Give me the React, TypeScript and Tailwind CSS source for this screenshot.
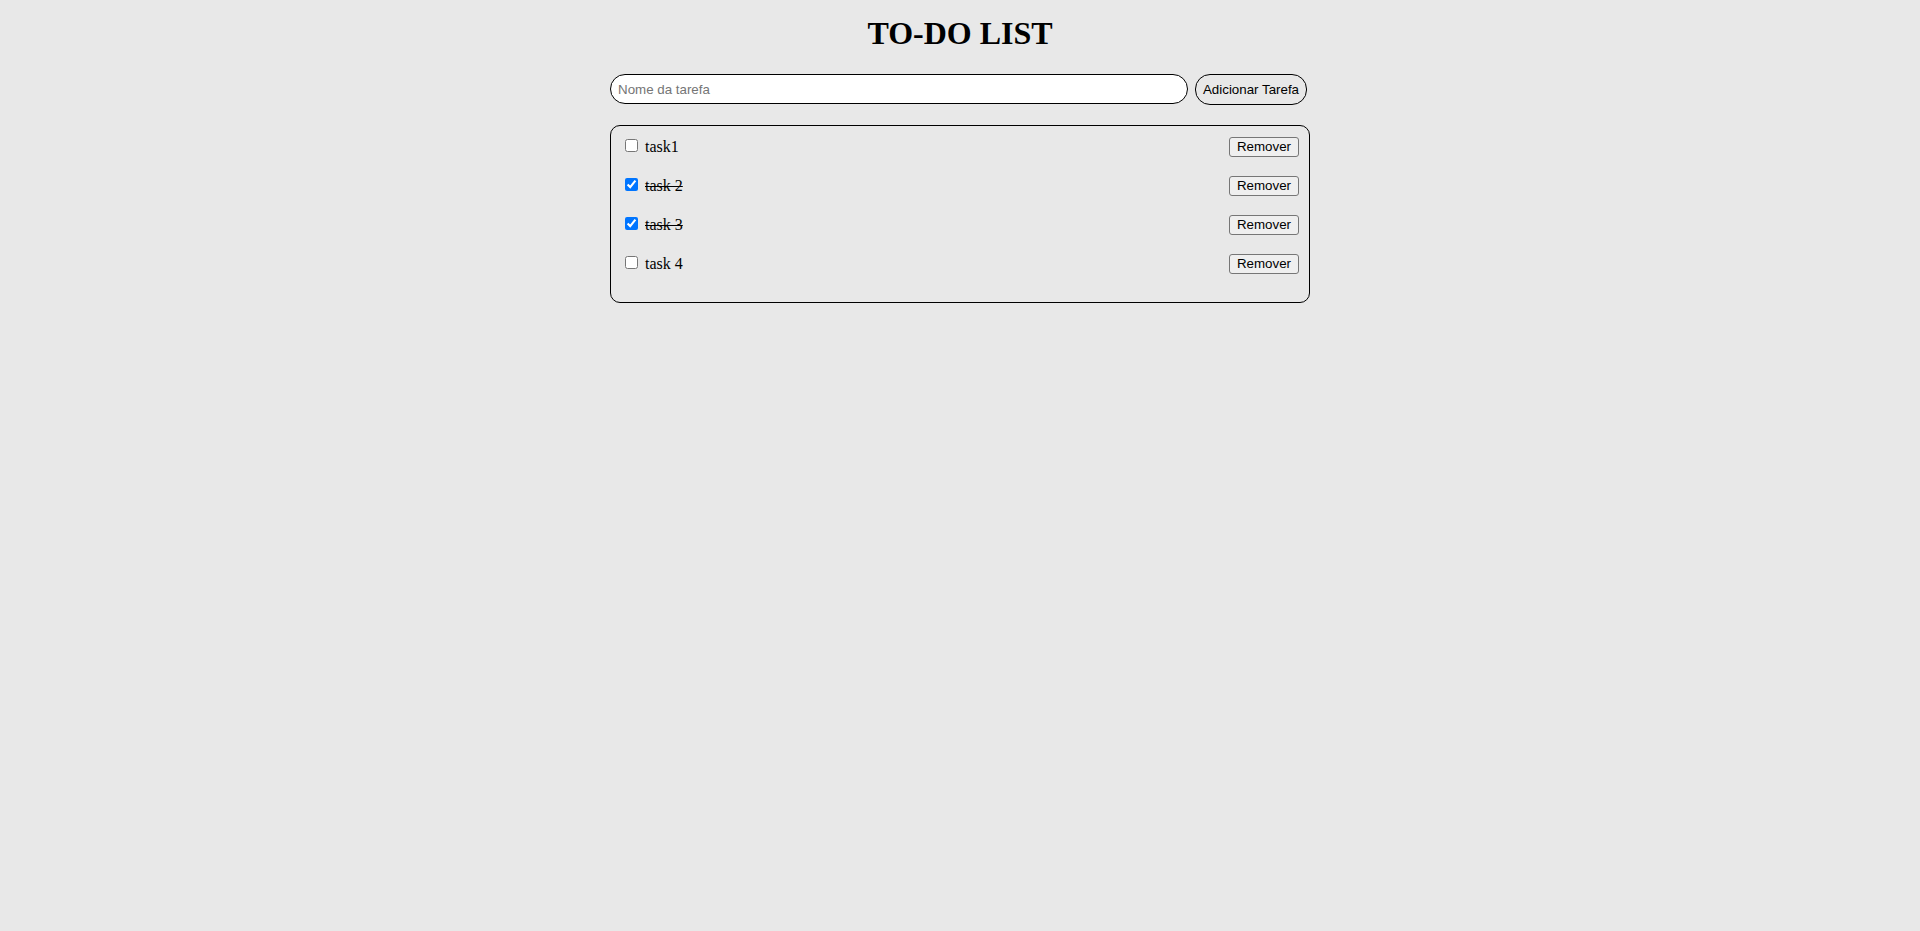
import React from "react";

const tasks = [
  { name: "task1", done: false },
  { name: "task 2", done: true },
  { name: "task 3", done: true },
  { name: "task 4", done: false },
];

export default function App() {
  return (
    <div className="min-h-[931px] w-full bg-[#e8e8e8] text-black font-['Liberation_Serif','Times_New_Roman',serif] overflow-hidden">
      <div className="mx-auto w-[700px] flex flex-col">
        <h1 className="mt-[15px] mb-[22px] text-center text-[32px] leading-[37px] font-bold">TO-DO LIST</h1>
        <div className="flex items-start h-[31px]">
          <input
            type="text"
            placeholder="Nome da tarefa"
            className="w-[578px] h-[30px] rounded-[15px] border border-black bg-white px-[7px] text-[13.33px] font-['Liberation_Sans',Arial,sans-serif] placeholder:text-[#757575] outline-none"
          />
          <button className="ml-[7px] w-[112px] h-[31px] rounded-[15px] border border-black bg-[#e8e8e8] text-[13.33px] font-['Liberation_Sans',Arial,sans-serif] text-black">
            Adicionar Tarefa
          </button>
        </div>
        <div className="mt-[20px] w-[700px] rounded-[10px] border border-black px-[10px] pt-[11px] pb-[9px]">
          {tasks.map((t) => (
            <div key={t.name} className="flex items-center justify-between h-[20px] mb-[19px]">
              <div className="flex items-center">
                <input
                  type="checkbox"
                  checked={t.done}
                  readOnly
                  className="w-[13px] h-[13px] ml-[4px] mr-[3px] mb-[3px] accent-[#0075ff]"
                />
                <span className={"ml-[4px] text-[16px] leading-[18px] " + (t.done ? "line-through" : "")}>{t.name}</span>
              </div>
              <button className="h-[20px] w-[70px] rounded-[3px] border border-[#767676] bg-[#efefef] text-[13.33px] leading-[16px] font-['Liberation_Sans',Arial,sans-serif] text-black">
                Remover
              </button>
            </div>
          ))}
        </div>
      </div>
    </div>
  );
}
